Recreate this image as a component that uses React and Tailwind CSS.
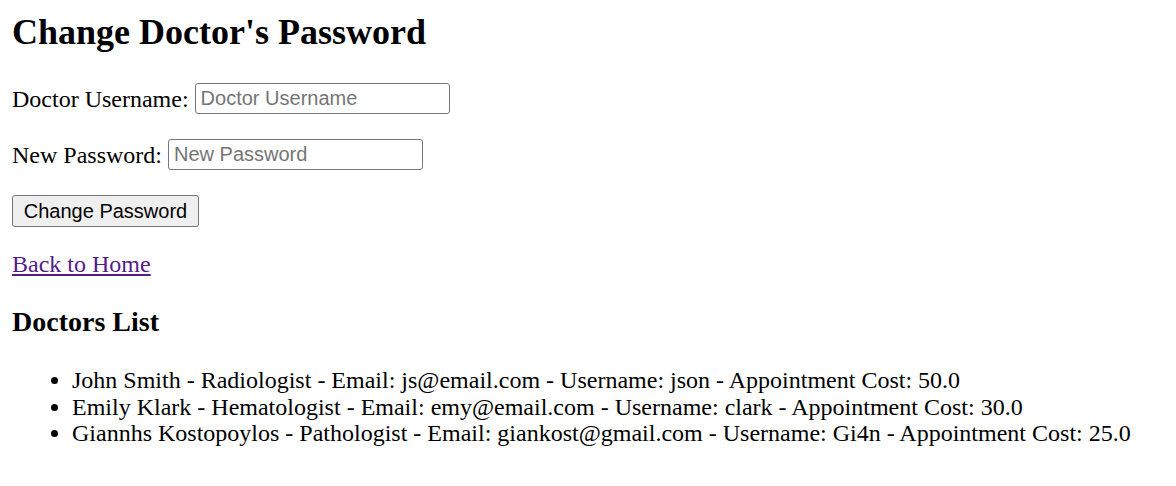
const doctors = [
  { name: 'John Smith', specialty: 'Radiologist', email: 'js@email.com', username: 'json', cost: '50.0' },
  { name: 'Emily Klark', specialty: 'Hematologist', email: 'emy@email.com', username: 'clark', cost: '30.0' },
  { name: 'Giannhs Kostopoylos', specialty: 'Pathologist', email: 'giankost@gmail.com', username: 'Gi4n', cost: '25.0' },
];

function Field({ label, placeholder, type = 'text' }) {
  return (
    <div className="flex items-center gap-[6px] h-[31px]">
      <label className="text-[24px] leading-[28px]">{label}</label>
      <input
        type={type}
        placeholder={placeholder}
        className="w-[255px] h-[31px] border border-[#767676] rounded-[3px] px-[5px] bg-white font-['Liberation_Sans',Arial,sans-serif] text-[20px] text-black placeholder:text-[#757575] outline-none"
      />
    </div>
  );
}

export default function App() {
  return (
    <div className="min-h-[486px] bg-white pl-[12px] pt-[12px] font-['Liberation_Serif','Times_New_Roman',serif] text-black">
      <h2 className="text-[36px] leading-[41px] font-bold">Change Doctor's Password</h2>

      <div className="mt-[30px]">
        <Field label="Doctor Username:" placeholder="Doctor Username" />
      </div>
      <div className="mt-[25px]">
        <Field label="New Password:" placeholder="New Password" type="password" />
      </div>

      <button className="mt-[25px] w-[187px] h-[32px] flex items-center justify-center bg-[#efefef] border border-[#767676] rounded-[3px] font-['Liberation_Sans',Arial,sans-serif] text-[20px] text-black">
        Change Password
      </button>

      <div className="mt-[23px] text-[24px] leading-[28px]">
        <a href="#" className="text-[#551a8b] underline">Back to Home</a>
      </div>

      <h3 className="mt-[28px] text-[28px] leading-[32px] font-bold">Doctors List</h3>

      <ul className="mt-[29px] pl-[60px] list-disc text-[24px] leading-[26.7px]">
        {doctors.map(d => (
          <li key={d.username}>
            {d.name} - {d.specialty} - Email: {d.email} - Username: {d.username} - Appointment Cost: {d.cost}
          </li>
        ))}
      </ul>
    </div>
  );
}
